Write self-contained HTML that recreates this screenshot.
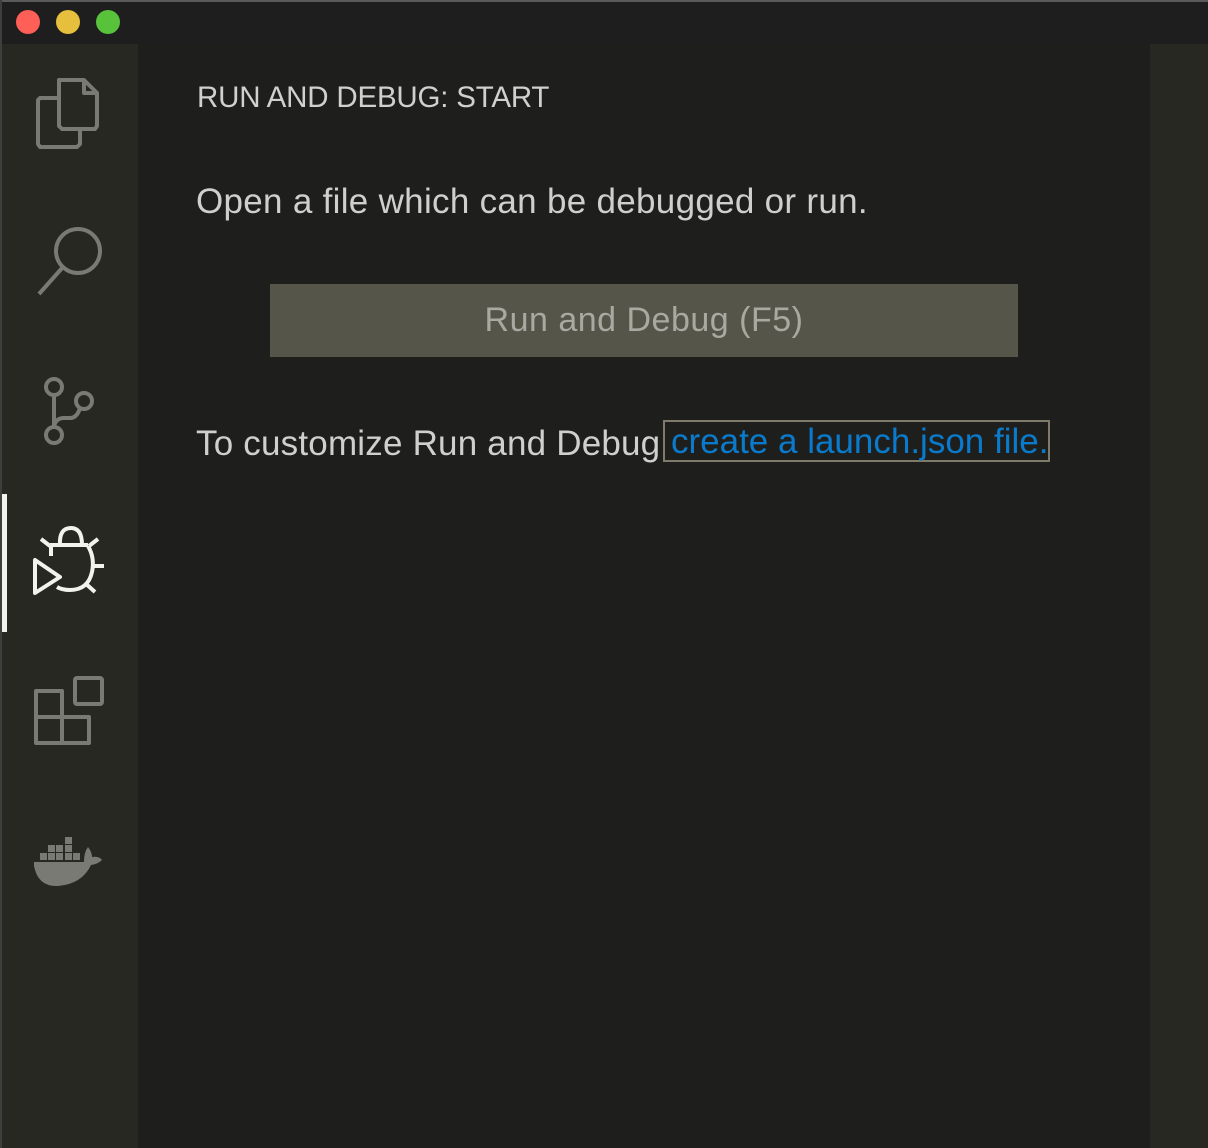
<!DOCTYPE html>
<html><head><meta charset="utf-8"><style>
html,body{margin:0;padding:0;width:1208px;height:1148px;overflow:hidden;background:#1e1e1e;font-family:"Liberation Sans",sans-serif;}
.top{position:absolute;left:0;top:0;width:1208px;height:2px;background:#5a5a5a;}
.dot{position:absolute;top:10px;width:24px;height:24px;border-radius:50%;}
.act{position:absolute;left:2px;top:44px;width:136px;height:1104px;background:#272822;}
.lborder{position:absolute;left:0;top:0;width:2px;height:1148px;background:#3e3e3e;}
.right{position:absolute;left:1150px;top:44px;width:58px;height:1104px;background:#272822;}
.main{position:absolute;left:138px;top:44px;width:1012px;height:1104px;background:#1e1f1c;}
.t{position:absolute;white-space:nowrap;color:#cfcfcf;}
.btn{position:absolute;left:270px;top:284px;width:748px;height:73px;background:#56554a;color:#a9a9a1;font-size:34px;line-height:73px;text-align:center;letter-spacing:0.5px;}
.link{position:absolute;left:663px;top:420px;width:387px;height:42px;border:2px solid #7f7a6a;color:#0a7acc;font-size:35px;line-height:40px;padding-left:6px;box-sizing:border-box;white-space:nowrap;letter-spacing:0px;}
svg{position:absolute;left:0;top:0;}
</style></head><body>
<div class="top"></div>
<div class="lborder"></div>
<div class="dot" style="left:16px;background:#fe5f57"></div>
<div class="dot" style="left:56px;background:#e6bf3c"></div>
<div class="dot" style="left:96px;background:#58c33a"></div>
<div class="act"></div>
<div class="main"></div>
<div class="right"></div>
<div style="position:absolute;left:2px;top:494px;width:5px;height:138px;background:#f3f3ee"></div>

<svg width="140" height="1148" viewBox="0 0 140 1148" fill="none" stroke-width="4">
<g stroke="#7a7a74" stroke-linejoin="round">
<path d="M59 80 H84 L97 93 V126 L95 129 H62 L59 126 Z"/>
<path d="M84 80 V93 H97"/>
<path d="M59 98 H40 L38 100 V144 L40 147 H77 L80 144 V129"/>
</g>
<g stroke="#7a7a74">
<circle cx="78" cy="251" r="22"/>
<path d="M63 267 L39 294"/>
</g>
<g stroke="#7a7a74">
<circle cx="54" cy="387" r="8"/>
<circle cx="84" cy="401" r="8"/>
<circle cx="54" cy="435" r="8"/>
<path d="M54 395 V427 M54 426 Q56 418 64 418 H70 Q77 418 80 408"/>
</g>
<g stroke="#f3f3ee" stroke-linejoin="round">
<path d="M60 545 Q59 528 71 528 Q82 528 82 545"/>
<path d="M50 545 H88"/>
<path d="M41 539 L50 546 M98 539 L89 546 M93 566 H104 M85 583 L95 592"/>
<path d="M51 545 V556"/>
<path d="M88 546 Q95 558 92 572 Q88 590 70 590 Q62 590 57 587"/>
<path d="M35 560 V593 L60 577 Z"/>
</g>
<g stroke="#7a7a74" stroke-linejoin="round">
<path d="M36 691 H62 V743 H36 Z M36 717 H89 V743 H62"/>
<rect x="75" y="678" width="27" height="26" rx="2"/>
</g>
<g fill="#7a7a74">
<rect x="65" y="837" width="7" height="7"/>
<rect x="48" y="845" width="7" height="7"/><rect x="56" y="845" width="7" height="7"/><rect x="65" y="845" width="7" height="7"/>
<rect x="40" y="853" width="7" height="7"/><rect x="48" y="853" width="7" height="7"/><rect x="56" y="853" width="7" height="7"/><rect x="65" y="853" width="7" height="7"/><rect x="73" y="853" width="7" height="7"/>
<path d="M34 862 H84 Q84 852 88 847 Q92 852 92 857 Q99 856 102 860 Q98 864 91 865 Q82 884 58 886 Q38 887 34 866 Z"/>
</g>
</svg>

<div class="t" style="left:197px;top:81px;font-size:29.5px;letter-spacing:-0.2px;color:#d0d0ce">RUN AND DEBUG: START</div>
<div class="t" style="left:196px;top:182px;font-size:35px;letter-spacing:0.3px;color:#cfcfcd">Open a file which can be debugged or run.</div>
<div class="btn">Run and Debug (F5)</div>
<div class="t" style="left:196px;top:424px;font-size:35px;letter-spacing:0.2px;color:#cfcfcd">To customize Run and Debug</div>
<div class="link">create a launch.json file.</div>
</body></html>
